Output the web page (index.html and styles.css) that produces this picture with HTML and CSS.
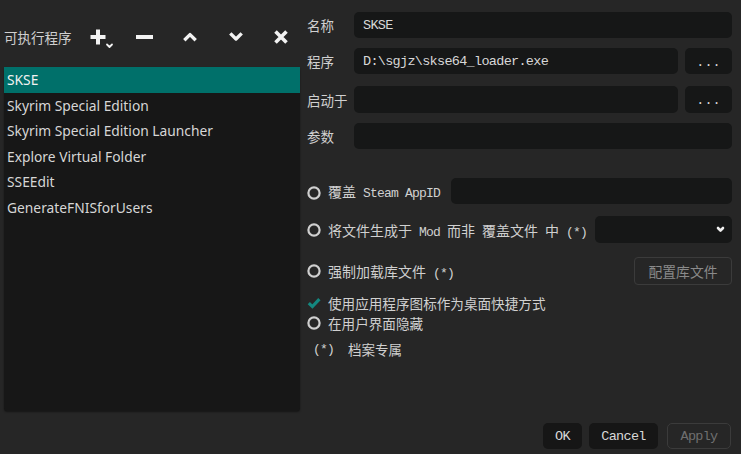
FILE: index.html
```html
<!DOCTYPE html>
<html>
<head>
<meta charset="utf-8">
<link rel="stylesheet" href="styles.css">
</head>
<body>
<div class="app">
  <div class="left">
    <div class="toolbar">
      <span class="tb-label">可执行程序</span>
      <svg class="ic ic-plus" width="24" height="20" viewBox="0 0 24 20"><path d="M8 0.5V15.5M0.5 8H15.5" stroke="#f2f2f2" stroke-width="4" fill="none"/><path d="M17 15.5L19.5 18L22 15.5" stroke="#f2f2f2" stroke-width="1.8" fill="none" stroke-linecap="round" stroke-linejoin="round"/></svg>
      <svg class="ic ic-minus" width="17" height="16" viewBox="0 0 17 16"><rect x="0" y="6" width="17" height="4" fill="#f2f2f2"/></svg>
      <svg class="ic ic-up" width="16" height="16" viewBox="0 0 16 16"><path d="M2.3 11.2L8 5.6L13.7 11.2" stroke="#f2f2f2" stroke-width="3.4" fill="none" stroke-linejoin="round"/></svg>
      <svg class="ic ic-down" width="16" height="16" viewBox="0 0 16 16"><path d="M2.3 4.4L8 10L13.7 4.4" stroke="#f2f2f2" stroke-width="3.4" fill="none" stroke-linejoin="round"/></svg>
      <svg class="ic ic-x" width="16" height="16" viewBox="0 0 16 16"><path d="M2.5 2.5L13.5 13.5M13.5 2.5L2.5 13.5" stroke="#f2f2f2" stroke-width="3.6" fill="none"/></svg>
    </div>
    <div class="list">
      <div class="item sel">SKSE</div>
      <div class="item">Skyrim Special Edition</div>
      <div class="item">Skyrim Special Edition Launcher</div>
      <div class="item">Explore Virtual Folder</div>
      <div class="item">SSEEdit</div>
      <div class="item">GenerateFNISforUsers</div>
    </div>
  </div>
  <div class="right">
    <div class="field">
      <span class="lbl">名称</span>
      <div class="input mono">SKSE</div>
    </div>
    <div class="field">
      <span class="lbl">程序</span>
      <div class="input mono">D:\sgjz\skse64_loader.exe</div>
      <div class="dots mono">...</div>
    </div>
    <div class="field f3">
      <span class="lbl">启动于</span>
      <div class="input"></div>
      <div class="dots mono">...</div>
    </div>
    <div class="field">
      <span class="lbl">参数</span>
      <div class="input"></div>
    </div>

    <div class="opt o1">
      <svg class="radio" width="14" height="14" viewBox="0 0 14 14"><circle cx="7" cy="7" r="5.6" stroke="#cfcfcf" stroke-width="2.2" fill="none"/></svg>
      <span class="opt-text">覆盖<span class="lat"> Steam AppID</span></span>
      <div class="input appid"></div>
    </div>
    <div class="opt o2">
      <svg class="radio" width="14" height="14" viewBox="0 0 14 14"><circle cx="7" cy="7" r="5.6" stroke="#cfcfcf" stroke-width="2.2" fill="none"/></svg>
      <span class="opt-text">将文件生成于<span class="lat"> Mod </span>而非<span class="lat"> </span>覆盖文件<span class="lat"> </span>中<span class="lat"> (*)</span></span>
      <div class="select"><svg width="9" height="7" viewBox="0 0 9 7"><path d="M2 2L4.5 4.6L7 2" stroke="#f0f0f0" stroke-width="2.6" fill="none" stroke-linecap="round" stroke-linejoin="round"/></svg></div>
    </div>
    <div class="opt o3">
      <svg class="radio" width="14" height="14" viewBox="0 0 14 14"><circle cx="7" cy="7" r="5.6" stroke="#cfcfcf" stroke-width="2.2" fill="none"/></svg>
      <span class="opt-text">强制加载库文件<span class="lat"> (*)</span></span>
      <div class="btn-outline">配置库文件</div>
    </div>
    <div class="opt o4">
      <svg class="radio" width="14" height="14" viewBox="0 0 14 14"><path d="M1.8 7.2L5.4 10.6L12.4 3.2" stroke="#14877f" stroke-width="3.2" fill="none"/></svg>
      <span class="opt-text small">使用应用程序图标作为桌面快捷方式</span>
    </div>
    <div class="opt o5">
      <svg class="radio" width="14" height="14" viewBox="0 0 14 14"><circle cx="7" cy="7" r="5.6" stroke="#cfcfcf" stroke-width="2.2" fill="none"/></svg>
      <span class="opt-text small">在用户界面隐藏</span>
    </div>
    <div class="note"><span class="paren">(*)</span>档案专属</div>

    <div class="actions">
      <div class="btn ok mono">OK</div>
      <div class="btn cancel mono">Cancel</div>
      <div class="btn apply mono">Apply</div>
    </div>
  </div>
</div>
</body>
</html>
```

FILE: styles.css
```css
html, body {
  margin: 0;
  padding: 0;
}
body {
  background: #262626;
  color: #d2d2d2;
  font-family: "Noto Sans CJK SC", "Noto Sans", sans-serif;
  overflow: hidden;
}
.app {
  display: flex;
  height: 454px;
  padding: 0 9px 0 4px;
  box-sizing: border-box;
}
.left {
  width: 296px;
  display: flex;
  flex-direction: column;
}
.toolbar {
  height: 60px;
  margin-top: 7px;
  display: flex;
  align-items: center;
}
.tb-label {
  font-size: 13.5px;
  color: #d0d0d0;
  width: 68px;
  white-space: nowrap;
  margin-top: -1px;
}
.ic { display: block; flex: none; }
.ic-plus { margin-left: 18px; margin-top: 4px; }
.ic-minus { margin-left: 22px; }
.ic-up { margin-left: 29px; }
.ic-down { margin-left: 30px; }
.ic-x { margin-left: 29px; }

.list {
  height: 344px;
  background: #171717;
  border-radius: 3px;
  box-shadow: 0 1px 2px rgba(0, 0, 0, 0.45);
}
.item {
  height: 25.5px;
  line-height: 25.5px;
  padding-left: 3px;
  font-family: "Noto Sans", sans-serif;
  font-size: 13.8px;
  color: #d6d6d6;
  white-space: nowrap;
}
.item.sel {
  background: #00706a;
  color: #f2f2f2;
}

.right {
  margin-left: 7px;
  flex: 1;
  display: flex;
  flex-direction: column;
  padding-top: 12px;
  padding-bottom: 5px;
}
.field {
  display: flex;
  align-items: center;
  height: 26px;
  margin-bottom: 10px;
}
.field.f3 { margin-top: 2px; height: 27px; }
.lbl {
  width: 47px;
  flex: none;
  font-size: 13.5px;
  color: #d0d0d0;
}
.input {
  flex: 1;
  align-self: stretch;
  background: #161717;
  border-radius: 5px;
  display: flex;
  align-items: center;
  padding-left: 9px;
  box-sizing: border-box;
  color: #d8d8d8;
}
.mono {
  font-family: "Liberation Mono", monospace;
  font-size: 13.5px;
  letter-spacing: -0.7px;
}
.dots {
  width: 47px;
  flex: none;
  align-self: stretch;
  margin-left: 7px;
  background: #161717;
  border-radius: 5px;
  display: flex;
  align-items: center;
  justify-content: center;
  color: #d8d8d8;
  padding-top: 2px;
  box-sizing: border-box;
  letter-spacing: 0;
}

.opt {
  display: flex;
  align-items: center;
}
.radio {
  display: block;
  flex: none;
  width: 14px;
  height: 14px;
  margin-right: 7px;
}
.opt-text {
  font-size: 14px;
  color: #d0d0d0;
  white-space: pre;
}
.opt-text.small { font-size: 13.6px; }
.lat {
  font-family: "Liberation Mono", monospace;
  font-size: 13px;
  letter-spacing: -0.8px;
}
.o1 { margin-top: 19px; height: 26px; }
.o1 .radio { margin-top: 4px; }
.appid {
  flex: none;
  width: 281px;
  margin-left: auto;
}
.o2 { margin-top: 12px; height: 27px; }
.select {
  width: 137px;
  margin-left: auto;
  align-self: stretch;
  background: #161717;
  border-radius: 5px;
  display: flex;
  align-items: center;
  justify-content: flex-end;
  padding-right: 7px;
  box-sizing: border-box;
}
.select svg { display: block; }
.o3 { margin-top: 14px; height: 28px; }
.btn-outline {
  width: 98px;
  margin-left: auto;
  align-self: stretch;
  border: 1px solid #3b3b3b;
  border-radius: 4px;
  box-sizing: border-box;
  display: flex;
  align-items: center;
  justify-content: center;
  font-size: 13.8px;
  color: #8a8a8a;
}
.o4 { margin-top: 8px; height: 20px; }
.o5 { height: 20px; }
.note {
  margin-top: 6px;
  height: 20px;
  display: flex;
  align-items: center;
  padding-left: 6px;
  font-size: 13.5px;
  color: #d0d0d0;
  white-space: pre;
}
.paren {
  font-family: "Liberation Mono", monospace;
  font-size: 13px;
  letter-spacing: -0.8px;
  margin-right: 14px;
}

.actions {
  margin-top: auto;
  display: flex;
  justify-content: flex-end;
  height: 26px;
  padding-right: 1px;
}
.btn {
  display: flex;
  align-items: center;
  justify-content: center;
  border-radius: 5px;
  box-sizing: border-box;
  color: #d8d8d8;
}
.ok { width: 39px; background: #161616; }
.cancel { width: 69px; background: #161616; margin-left: 7px; }
.apply {
  width: 64px;
  margin-left: 9px;
  border: 1px solid #3b3b3b;
  color: #6f6f6f;
}
```
